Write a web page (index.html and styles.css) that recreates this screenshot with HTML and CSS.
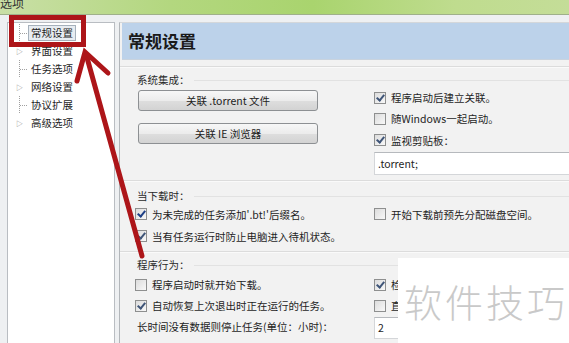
FILE: index.html
```html
<!DOCTYPE html>
<html lang="zh-CN">
<head>
    <meta charset="UTF-8">
    <title>选项</title>
    <link rel="stylesheet" href="styles.css">
</head>
<body>
    <div class="titlebar"><span>选项</span></div>

    <div class="window">
        <div class="tree">
            <ul>
                <li><span class="leaf"></span><span class="label selected">常规设置</span></li>
                <li><span class="twist">▷</span><span class="label">界面设置</span></li>
                <li><span class="leaf"></span><span class="label">任务选项</span></li>
                <li><span class="twist">▷</span><span class="label">网络设置</span></li>
                <li><span class="leaf"></span><span class="label">协议扩展</span></li>
                <li><span class="twist">▷</span><span class="label">高级选项</span></li>
            </ul>
        </div>

        <div class="main">
            <div class="header">常规设置</div>

            <div class="group first">
                <div class="group-title">系统集成：</div>
                <div class="cols">
                    <div class="col-left">
                        <button>关联 .torrent 文件</button>
                        <button>关联 IE 浏览器</button>
                    </div>
                    <div class="col-right">
                        <div class="check"><span class="box on"></span>程序启动后建立关联。</div>
                        <div class="check"><span class="box"></span>随Windows一起启动。</div>
                        <div class="check tall"><span class="box on"></span>监视剪贴板：</div>
                        <div class="field">.torrent;</div>
                    </div>
                </div>
            </div>

            <div class="group second">
                <div class="group-title">当下载时：</div>
                <div class="grid">
                    <div class="check"><span class="box on dark"></span>为未完成的任务添加'.bt!'后缀名。</div>
                    <div class="check"><span class="box"></span>开始下载前预先分配磁盘空间。</div>
                    <div class="check"><span class="box on"></span>当有任务运行时防止电脑进入待机状态。</div>
                </div>
            </div>

            <div class="group third">
                <div class="group-title">程序行为：</div>
                <div class="grid">
                    <div class="check"><span class="box"></span>程序启动时就开始下载。</div>
                    <div class="check"><span class="box on"></span>检</div>
                    <div class="check"><span class="box on"></span>自动恢复上次退出时正在运行的任务。</div>
                    <div class="check"><span class="box"></span>直</div>
                    <div class="plain">长时间没有数据则停止任务(单位：小时)：</div>
                    <div class="field small">2</div>
                </div>
            </div>
        </div>
    </div>

    <div class="watermark">软件技巧</div>

    <svg class="annotation" width="569" height="343" viewBox="0 0 569 343">
        <rect x="11.5" y="17.5" width="72" height="27" fill="none" stroke="#ad1519" stroke-width="5"/>
        <line x1="142" y1="256" x2="86" y2="54" stroke="#ad1519" stroke-width="5" stroke-linecap="round"/>
        <polyline points="77,81 85,52 108,73" fill="none" stroke="#ad1519" stroke-width="5" stroke-linecap="round" stroke-linejoin="miter"/>
    </svg>
</body>
</html>
```

FILE: styles.css
```css
body {
    margin: 0;
    width: 569px;
    height: 343px;
    overflow: hidden;
    position: relative;
    background-color: #eef0f2;
    font-family: "Noto Sans CJK SC", "Liberation Sans", sans-serif;
    font-size: 10.5px;
    color: #1e1e1e;
}
.titlebar {
    height: 14px;
    overflow: hidden;
    background: linear-gradient(90deg, #c9dfa6 0%, #b3d77f 30%, #a9d46e 55%, #bfdc8e 80%, #c4dd98 100%);
    border-bottom: 1px solid #9fb08a;
}
.titlebar span {
    display: block;
    margin-top: -6px;
    font-size: 12px;
    line-height: 18px;
    color: #333;
}
.window {
    display: flex;
    padding: 7px 0 0 7px;
    height: 321px;
}
.tree {
    width: 106px;
    background-color: #fff;
    border: 1px solid #b9bdc2;
    border-bottom: none;
}
.tree ul {
    list-style: none;
    margin: 1px 0 0 11px;
    padding: 0;
    border-left: 1px dotted #a0a0a0;
    height: 99px;
}
.tree li {
    display: flex;
    align-items: center;
    height: 18px;
}
.leaf {
    width: 7px;
    border-top: 1px dotted #a0a0a0;
}
.twist {
    width: 8px;
    margin-left: -4px;
    margin-right: 3px;
    font-size: 7px;
    line-height: 18px;
    color: #8a8a8a;
    background-color: #fff;
}
.label {
    margin-left: 1px;
    padding: 0 2px;
    line-height: 14px;
    border: 1px solid transparent;
}
.label.selected {
    background-color: #e7ecf1;
    border-color: #a5b0bb;
}
.main {
    flex: 1;
    margin-left: 4px;
    background-color: #f2f2f2;
    border-left: 1px solid #b2b6ba;
    border-top: 1px solid #d4d7da;
    overflow: hidden;
}
.header {
    margin: 0 0 0 2px;
    height: 36px;
    line-height: 36px;
    padding-left: 6px;
    background-color: #bcd2ea;
    border-bottom: 1px solid #c9d3de;
    font-size: 17px;
    font-weight: bold;
    color: #1a1a1a;
}
.group {
    padding-left: 15px;
    border-top: 1px solid #dcdcdc;
    box-shadow: inset 0 1px 0 #fafafa;
}
.group.first {
    margin-top: 6px;
    padding-top: 6px;
    padding-bottom: 5px;
}
.group.second {
    padding-top: 8px;
    padding-bottom: 4px;
}
.group.third {
    padding-top: 6px;
}
.group-title {
    display: flex;
    align-items: center;
    gap: 4px;
    height: 14px;
    line-height: 14px;
    padding-left: 2px;
    color: #2a2a2a;
}
.group-title::after {
    content: "";
    flex: 1;
    height: 1px;
    background-color: #e2e2e2;
}
.cols {
    display: flex;
}
.col-left {
    width: 239px;
    flex-shrink: 0;
}
.col-right {
    flex: 1;
}
button {
    display: block;
    width: 180px;
    height: 21px;
    margin: 3px 0 12px 3px;
    padding: 0;
    border: 1px solid #8d9093;
    border-radius: 3px;
    background: linear-gradient(#f7f7f7 0%, #ececec 50%, #dedede 51%, #d3d3d3 100%);
    font-family: inherit;
    font-size: 10.5px;
    color: #222;
}
.check {
    display: flex;
    align-items: center;
    height: 21px;
    white-space: nowrap;
}
.check.tall {
    height: 22px;
}
.box {
    width: 10px;
    height: 10px;
    margin-right: 5px;
    border: 1px solid #8e8f8f;
    background: linear-gradient(135deg, #dcdcdc, #f8f8f8);
    position: relative;
}
.box.on::after {
    content: "";
    position: absolute;
    left: 3px;
    top: 0;
    width: 3px;
    height: 6px;
    border: solid #3f5578;
    border-width: 0 2px 2px 0;
    transform: rotate(40deg);
}
.box.dark::after {
    border-color: #1d3f86;
}
.field {
    width: 210px;
    height: 21px;
    margin-top: 1px;
    padding-left: 3px;
    line-height: 21px;
    background-color: #fff;
    border: 1px solid #d4d6d9;
    border-top-color: #b6b9bd;
}
.grid {
    display: grid;
    grid-template-columns: 239px 1fr;
}
.second .check {
    height: 22px;
}
.third .grid {
    margin-top: 2px;
}
.third .check {
    height: 21px;
}
.plain {
    height: 22px;
    line-height: 22px;
    padding-left: 2px;
}
.field.small {
    height: 20px;
    line-height: 20px;
    margin-top: 1px;
}
.watermark {
    position: absolute;
    left: 398px;
    top: 258px;
    width: 171px;
    height: 85px;
    background-color: #fff;
    font-size: 38px;
    line-height: 85px;
    padding-left: 6px;
    color: #c9c9c9;
    font-weight: 300;
    letter-spacing: 3px;
    white-space: nowrap;
}
.annotation {
    position: absolute;
    left: 0;
    top: 0;
    pointer-events: none;
}
```
